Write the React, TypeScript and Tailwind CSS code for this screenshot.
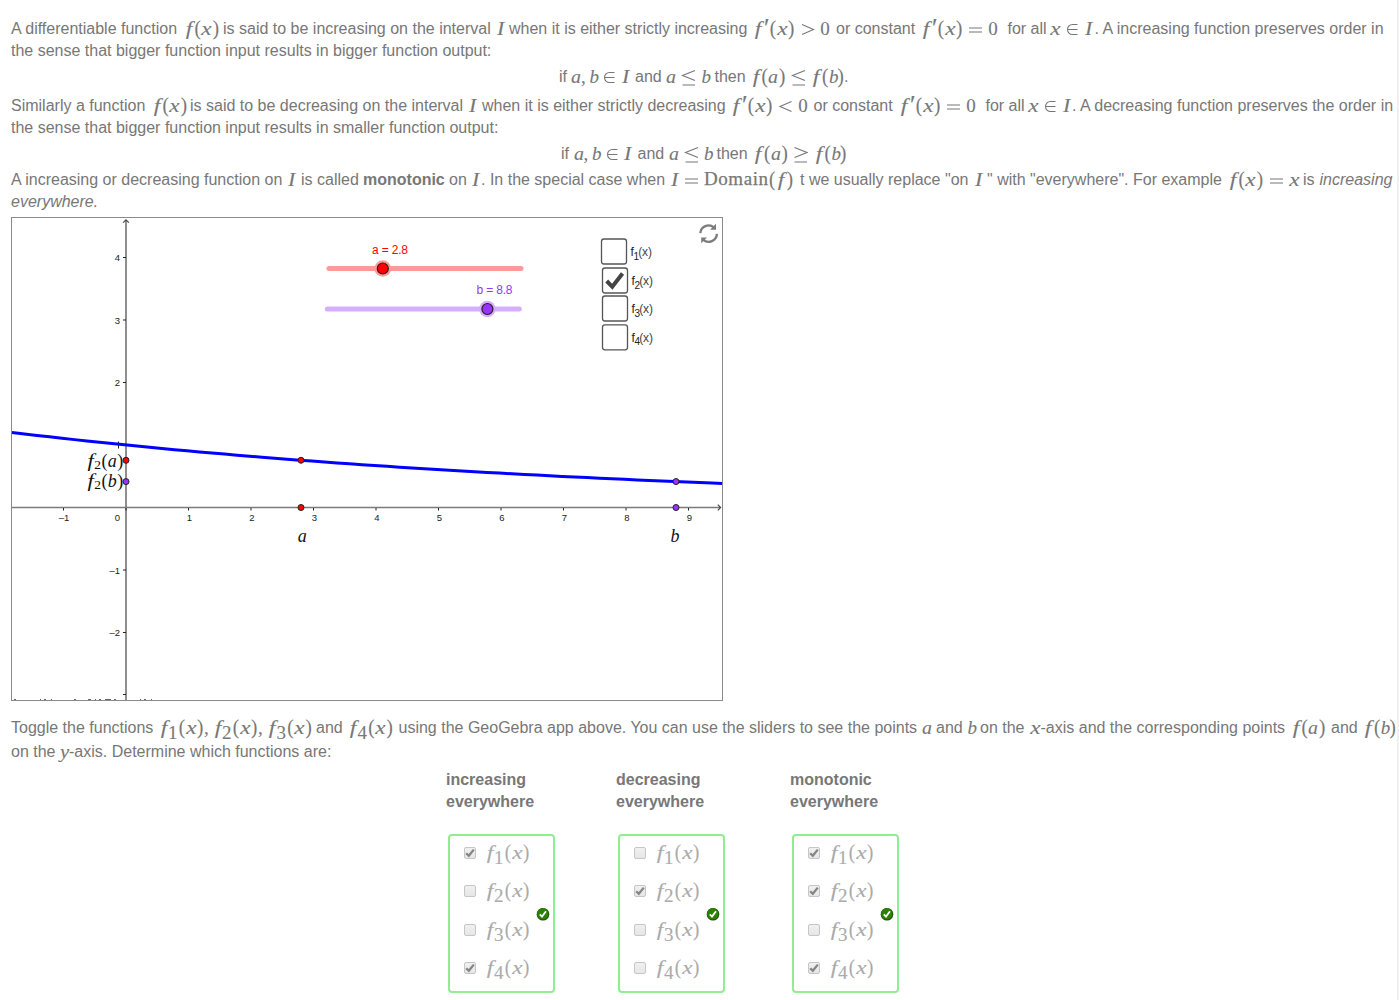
import React from "react";

/* ---------- inline mathematics ---------- */

const GLYPHS: Record<string, string> = {
  f: "w-[0.55em] italic pl-[0.13em] scale-x-[1.25]",
  x: "w-[0.572em] italic text-center scale-x-[1.22]",
  y: "w-[0.5em] italic text-center scale-x-[1.1]",
  a: "w-[0.529em] italic text-center scale-x-[1.05]",
  b: "w-[0.429em] italic text-center",
  I: "w-[0.48em] italic text-center scale-x-[1.15]",
  "(": "w-[0.389em] text-center scale-y-[1.1]",
  ")": "w-[0.389em] text-center scale-y-[1.1]",
  "′": "w-[0.33em] text-left italic scale-[1.4] origin-[30%_60%]",
  ",": "w-[0.445em] text-left",
  "0": "w-[0.5em] text-center",
};

const OPERATORS: Record<string, React.ReactNode> = {
  "∈": <path d="M11.5 3H6.5a5 5 0 0 0 0 10h5M1.8 8h9.7" />,
  "≤": <path d="M14 1L1.5 6L14 11M1.5 15.5H14" />,
  "≥": <path d="M1.5 1L14 6L1.5 11M1.5 15.5H14" />,
  "<": <path d="M13.5 3L2 8L13.5 13" />,
  ">": <path d="M2 3L13.5 8L2 13" />,
  "=": <path d="M1 6.5H14M1 10.5H14" />,
};

function Operator({ sign }: { sign: string }) {
  return (
    <span className={sign === "∈" ? "inline-block w-[1.22em] pl-[5.5px]" : "inline-block w-[1.334em] pl-[5px]"}>
      <svg
        className="inline-block h-[17px] w-[15px] align-[-4px]"
        viewBox="0 0 15 17"
        fill="none"
        stroke="currentColor"
        strokeWidth="1.1"
        role="img"
        aria-label={sign}
      >
        {OPERATORS[sign]}
      </svg>
    </span>
  );
}

function M({ t }: { t: string }) {
  const out: React.ReactNode[] = [];
  const chars = Array.from(t);
  chars.forEach((c, i) => {
    if (OPERATORS[c]) {
      out.push(<Operator key={i} sign={c} />);
    } else if (/[1-4]/.test(c)) {
      out.push(
        <span key={i} className="relative top-[5px] -ml-[2px] inline-block w-[0.6em] text-center">
          {c}
        </span>,
      );
    } else {
      out.push(
        <span key={i} className={`inline-block ${GLYPHS[c] ?? ""}`}>
          {c}
        </span>,
      );
    }
  });
  return (
    <span className="-ml-[0.5px] inline-block translate-y-[0.5px] font-['Liberation_Serif',serif] text-[19px] leading-[0] whitespace-nowrap [-webkit-text-stroke:0.1px_currentColor]">
      {out}
    </span>
  );
}

/* A line of prose: every run starts at its own tab stop. */
type Run = [number, React.ReactNode];

function Line({ runs, className }: { runs: Run[]; className: string }) {
  return (
    <div className={`flex items-baseline whitespace-nowrap leading-[22px] ${className}`}>
      {runs.map(([start, node], i) => {
        const next = runs[i + 1];
        return (
          <span
            key={i}
            className="block shrink-0"
            style={{ marginLeft: i === 0 ? start : 0, width: next ? next[0] - start : undefined }}
          >
            {node}
          </span>
        );
      })}
    </div>
  );
}

/* ---------- graph ---------- */

const X0 = 126;
const Y0 = 507.5;
const UNIT = 62.5;
const px = (x: number) => X0 + x * UNIT;
const py = (y: number) => Y0 - y * UNIT;
const decay = (x: number) => Math.exp(-x / 10);

const curve = Array.from({ length: 57 }, (_, i) => {
  const x = -1.824 + i * 0.2;
  return `${i === 0 ? "M" : "L"}${px(x).toFixed(2)} ${py(decay(x)).toFixed(2)}`;
}).join(" ");

const CHECKS = [
  { n: 1, x: 601.5, y: 239, on: false },
  { n: 2, x: 602.5, y: 268, on: true },
  { n: 3, x: 602.5, y: 296, on: false },
  { n: 4, x: 602.5, y: 324.8, on: false },
];

function Slider({ x, y, knob, fill, track }: { x: number; y: number; knob: number; fill: string; track: string }) {
  return (
    <g>
      <line x1={x} x2={x + 192} y1={y} y2={y} stroke={track} strokeWidth="5" strokeLinecap="round" />
      <circle cx={knob} cy={y} r="8.3" fill={track} />
      <circle cx={knob} cy={y} r="5.5" fill={fill} stroke="#222" strokeWidth="1.2" />
    </g>
  );
}

function Graph() {
  return (
    <svg className="block h-[484px] w-[712px]" viewBox="11 217 712 484">
      <rect x="11.5" y="217.5" width="711" height="483" fill="#fff" stroke="#8a8a8a" />
      <g stroke="#7b7b7b" strokeWidth="1.7">
        <line x1="12" x2="720" y1={Y0} y2={Y0} />
        <line x1={X0} x2={X0} y1="221" y2="700" />
      </g>
      <g stroke="#444" strokeWidth="1.2" fill="none">
        <path d="M123.2 222.6L126 219.8L128.8 222.6" />
        <path d="M717.8 504.7L720.6 507.5L717.8 510.3" />
      </g>

      <g fontFamily="Liberation Sans, sans-serif" fontSize="9.5" fill="#222">
        {[-1, 0, 1, 2, 3, 4, 5, 6, 7, 8, 9].map((n) => (
          <g key={n}>
            <line x1={px(n)} x2={px(n)} y1="508" y2="510.5" stroke="#222" />
            <text x={n === 0 ? 117.5 : n < 0 ? 64 : px(n) + 0.9} y="521" textAnchor="middle">
              {n < 0 ? "–1" : n}
            </text>
          </g>
        ))}
        {[-2, -1, 2, 3, 4].map((n) => (
          <g key={n}>
            <line x1="123" x2="126" y1={py(n)} y2={py(n)} stroke="#222" />
            <text x="120" y={py(n) + 3.5} textAnchor="end">
              {n < 0 ? `–${-n}` : n}
            </text>
          </g>
        ))}
        <line x1="123" x2="126" y1="694.5" y2="694.5" stroke="#222" />
        <line x1="118.5" x2="118.5" y1="441.5" y2="448.5" stroke="#222" />
      </g>

      <path d={`${curve} L722 483.6`} fill="none" stroke="#0000ff" strokeWidth="3" />

      <g stroke="#222" strokeWidth="1">
        <circle cx="126" cy="460.3" r="3" fill="#f00" />
        <circle cx="126" cy="481.6" r="3" fill="#9933ff" />
        <circle cx={px(2.8)} cy={py(decay(2.8))} r="3" fill="#f00" />
        <circle cx={px(2.8)} cy={Y0} r="3" fill="#f00" />
        <circle cx={px(8.8)} cy={py(decay(8.8))} r="3" fill="#9933ff" />
        <circle cx={px(8.8)} cy={Y0} r="3" fill="#9933ff" />
      </g>

      <g fontFamily="Liberation Serif, serif" fontSize="18" fill="#111">
        {[
          { v: "a", y: 467 },
          { v: "b", y: 487.3 },
        ].map(({ v, y }) => (
          <g key={v}>
            <text transform={`translate(87.5 ${y}) scale(1.25 1)`} fontStyle="italic">f</text>
            <text x="94.2" y={y + 2} fontSize="13.5">2</text>
            <text x="101.4" y={y}>(</text>
            <text x="107.8" y={y} fontStyle="italic">{v}</text>
            <text x="117.3" y={y}>)</text>
          </g>
        ))}
        <text x="297.8" y="541.5" fontStyle="italic">a</text>
        <text x="670.6" y="541.5" fontStyle="italic">b</text>
      </g>

      <Slider x={329} y={268.5} knob={382.8} fill="#ff0000" track="#ff9999" />
      <Slider x={327.3} y={309} knob={487.4} fill="#9933ff" track="#d6adff" />
      <g fontFamily="Liberation Sans, sans-serif" fontSize="12">
        <text x="372" y="254" fill="#ff0000" textLength="36">a = 2.8</text>
        <text x="476.5" y="294" fill="#9933ff" textLength="36">b = 8.8</text>
      </g>

      {CHECKS.map((c) => (
        <g key={c.n}>
          <rect x={c.x} y={c.y} width="25" height="25" rx="2.5" fill="#fff" stroke="#555" strokeWidth="1.3" />
          {c.on && (
            <path d={`M${c.x + 4.2} ${c.y + 13}L${c.x + 9.8} ${c.y + 18.8}L${c.x + 20} ${c.y + 5.5}`} fill="none" stroke="#444" strokeWidth="4" />
          )}
          <g fontFamily="Liberation Sans, sans-serif" fill="#222" fontSize="12">
            <text x={c.x + 29} y={c.y + 17}>f</text>
            <text x={c.x + 32} y={c.y + 20.5} fontSize="10">{c.n}</text>
            <text x={c.x + 36.8} y={c.y + 17} fill="#444" textLength="13.6">(x)</text>
          </g>
        </g>
      ))}

      <g fill="none" stroke="#7d7d7d" strokeWidth="2.3">
        <path d="M700.3 233.2A8.3 8.3 0 0 1 714 227.5" />
        <path d="M716.9 233.9A8.3 8.3 0 0 1 703.2 239.8" />
      </g>
      <path d="M716 223.8V229.8H710Z M701.2 243.2V237.6H707Z" fill="#7d7d7d" />

      <g stroke="#666" strokeWidth="1">
        <line x1="14" x2="153" y1="699.5" y2="699.5" strokeDasharray="2 24 1 3 2 5 1 22 2 12 3 4 1 3 2 4 6 3" />
      </g>
    </svg>
  );
}

/* ---------- answer tables ---------- */

function DisabledCheck({ on }: { on: boolean }) {
  return (
    <span className="flex h-[12px] w-[12px] items-center justify-center rounded-[2px] border border-[#c6c6c6] bg-linear-to-b from-[#f0f0f0] to-[#e6e6e6]">
      {on && (
        <svg className="h-[10px] w-[10px] shrink-0" viewBox="0 0 10 10" fill="none" stroke="#858585" strokeWidth="2.3">
          <path d="M1.2 5.2L3.8 7.8L8.8 1.6" />
        </svg>
      )}
    </span>
  );
}

function Correct() {
  return (
    <svg className="-ml-px h-[14px] w-[14px] shrink-0" viewBox="0 0 14 14">
      <circle cx="7" cy="7.2" r="6.3" fill="#1a4d05" />
      <circle cx="6.8" cy="6.8" r="5.8" fill="#2c8003" />
      <path d="M3.8 7.3L6 9.6L10 4.2" fill="none" stroke="#fff" strokeWidth="1.8" />
    </svg>
  );
}

function Answers({ title, checked, className }: { title: string; checked: number[]; className: string }) {
  return (
    <div className={className}>
      <div className="h-[65px] text-[16px] leading-[22px] font-bold">
        {title}
        <br />
        everywhere
      </div>
      <div className="ml-[2px] flex h-[159px] w-[107px] items-center rounded-[4px] border-2 border-[#90ee90]">
        <div className="flex w-[87px] shrink-0 flex-col pb-[6px] pl-[14px] text-[#aaa]">
          {[1, 2, 3, 4].map((n) => (
            <div key={n} className="flex h-[38.3px] items-center gap-[9px]">
              <DisabledCheck on={checked.includes(n)} />
              <span className="leading-[22px]">
                <M t={`f${n}(x)`} />
              </span>
            </div>
          ))}
        </div>
        <Correct />
      </div>
    </div>
  );
}

export default function App() {
  return (
    <div className="h-[1000px] w-[1399px] overflow-hidden border-r-2 border-[#f0f0f0] bg-white pt-[18px] font-['Liberation_Sans',sans-serif] text-[16px] text-[#777]">
      <Line
        className="h-[22px]"
        runs={[
          [11, "A differentiable function"],
          [184, <M t="f(x)" />],
          [223, "is said to be increasing on the interval"],
          [496, <M t="I" />],
          [509, "when it is either strictly increasing"],
          [753, <M t="f′(x)>0" />],
          [836, "or constant"],
          [921, <M t="f′(x)=0" />],
          [1007.5, "for all"],
          [1050.5, <M t="x∈I" />],
          [1094.5, ". A increasing function preserves order in"],
        ]}
      />
      <Line className="h-[26px]" runs={[[11, "the sense that bigger function input results in bigger function output:"]]} />
      <Line
        className="h-[29px]"
        runs={[
          [559, "if"],
          [571.5, <M t="a,b∈I" />],
          [635, "and"],
          [666.5, <M t="a≤b" />],
          [714.5, "then"],
          [751, <M t="f(a)≤f(b)" />],
          [844, "."],
        ]}
      />
      <Line
        className="h-[22px]"
        runs={[
          [11, "Similarly a function"],
          [152, <M t="f(x)" />],
          [190, "is said to be decreasing on the interval"],
          [468.5, <M t="I" />],
          [482, "when it is either strictly decreasing"],
          [731, <M t="f′(x)<0" />],
          [813.5, "or constant"],
          [899, <M t="f′(x)=0" />],
          [985.5, "for all"],
          [1028.5, <M t="x∈I" />],
          [1072, ". A decreasing function preserves the order in"],
        ]}
      />
      <Line className="h-[26px]" runs={[[11, "the sense that bigger function input results in smaller function output:"]]} />
      <Line
        className="h-[26px]"
        runs={[
          [561, "if"],
          [574, <M t="a,b∈I" />],
          [637.5, "and"],
          [669, <M t="a≤b" />],
          [716.5, "then"],
          [753.5, <M t="f(a)≥f(b)" />],
        ]}
      />
      <Line
        className="h-[22px]"
        runs={[
          [11, "A increasing or decreasing function on"],
          [287.5, <M t="I" />],
          [301, "is called"],
          [363, <b>monotonic</b>],
          [449, "on"],
          [471.5, <M t="I" />],
          [481, ". In the special case when"],
          [670, <M t="I=" />],
          [704, <span className="font-['Liberation_Serif',serif] text-[19px] leading-[0] tracking-[0.03em] [-webkit-text-stroke:0.25px_currentColor]">Domain</span>],
          [769, <M t="(f)" />],
          [800, "t we usually replace \"on"],
          [974, <M t="I" />],
          [987, "\" with \"everywhere\". For example"],
          [1228, <M t="f(x)=x" />],
          [1303, "is"],
          [1319.5, <i>increasing</i>],
        ]}
      />
      <Line className="h-[26px]" runs={[[11, <i>everywhere</i>], [93, "."]]} />
      <div className="ml-[11px] h-[499px]">
        <Graph />
      </div>
      <Line
        className="mt-px h-[24px]"
        runs={[
          [11, "Toggle the functions"],
          [159, <M t="f1(x)," />],
          [213, <M t="f2(x)," />],
          [267.5, <M t="f3(x)" />],
          [316, "and"],
          [348.5, <M t="f4(x)" />],
          [398.5, "using the GeoGebra app above. You can use the sliders to see the points"],
          [922, <M t="a" />],
          [936, "and"],
          [968, <M t="b" />],
          [980, "on the"],
          [1030, <M t="x" />],
          [1040.5, "-axis and the corresponding points"],
          [1291, <M t="f(a)" />],
          [1331, "and"],
          [1363.5, <M t="f(b)" />],
        ]}
      />
      <Line className="h-[28px]" runs={[[11, "on the"], [60.5, <M t="y" />], [69, "-axis. Determine which functions are:"]]} />
      <div className="flex pl-[446px]">
        <Answers title="increasing" checked={[1, 4]} className="w-[170px]" />
        <Answers title="decreasing" checked={[2]} className="w-[174px]" />
        <Answers title="monotonic" checked={[1, 2, 4]} className="w-[120px]" />
      </div>
    </div>
  );
}
